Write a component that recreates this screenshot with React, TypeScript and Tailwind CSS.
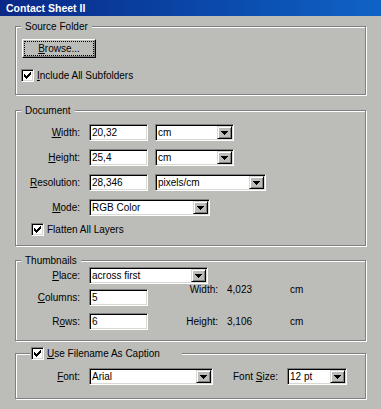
import React from 'react';

const sunken =
  'border border-t-[#808080] border-l-[#808080] border-r-white border-b-white shadow-[inset_1px_1px_0_#000,inset_-1px_-1px_0_#d8d8d4]';

const CheckMark = () => (
  <svg width="7" height="7" viewBox="0 0 7 7" shapeRendering="crispEdges">
    <path d="M6 0h1v1h-1z M5 1h2v1h-2z M0 2h1v1h-1z M4 2h3v1h-3z M0 3h2v1h-2z M3 3h3v1h-3z M0 4h5v1h-5z M1 5h3v1h-3z M2 6h1v1h-1z" />
  </svg>
);

const Check = ({ children, className = '' }: { children: React.ReactNode; className?: string }) => (
  <div className={`flex items-center h-[13px] ${className}`}>
    <span className={`${sunken} bg-white w-[13px] h-[13px] flex items-center justify-center shrink-0`}>
      <CheckMark />
    </span>
    <span className="ml-[3px] leading-[13px] whitespace-nowrap">{children}</span>
  </div>
);

const TextBox = ({ value }: { value: string }) => (
  <div className={`${sunken} bg-white w-[59px] h-[17px] pl-[2px] flex items-center`}>{value}</div>
);

const Combo = ({ value, className }: { value: string; className: string }) => (
  <div className={`${sunken} bg-white h-[17px] flex items-stretch ${className}`}>
    <span className="flex-1 pl-[2px] flex items-center whitespace-nowrap overflow-hidden">{value}</span>
    <span className="w-[15px] m-[1px] bg-[#bcbdb9] border border-t-[#d8d8d4] border-l-[#d8d8d4] border-r-black border-b-black shadow-[inset_1px_1px_0_#fff,inset_-1px_-1px_0_#808080] flex items-center justify-center">
      <svg width="7" height="4" viewBox="0 0 7 4" shapeRendering="crispEdges">
        <path d="M0 0h7v1H0z M1 1h5v1H1z M2 2h3v1H2z M3 3h1v1H3z" />
      </svg>
    </span>
  </div>
);

const Label = ({ k, rest }: { k: string; rest: string }) => (
  <span className="w-[64px] text-right whitespace-nowrap">
    <span className="underline">{k}</span>
    {rest}
  </span>
);

const Group = ({
  legend,
  className = '',
  children,
}: {
  legend: React.ReactNode;
  className?: string;
  children: React.ReactNode;
}) => (
  <fieldset className={`border border-[#808080] shadow-[1px_1px_0_#fff,inset_1px_1px_0_#fff] min-w-0 ${className}`}>
    {legend}
    {children}
  </fieldset>
);

const TextLegend = ({ text }: { text: string }) => (
  <legend className="ml-[5px] px-[4px] h-[13px] leading-[13px] bg-[#bcbdb9]">{text}</legend>
);

export default function App() {
  return (
    <div className="w-[381px] h-[409px] overflow-hidden bg-[#bcbdb9] text-black text-[10px] font-['Liberation_Sans',Arial,sans-serif]">
      <div className="h-[16px] pl-[6px] bg-linear-to-r from-[#0a2888] to-[#0f63c6] text-white font-bold text-[10.5px] leading-[16px]">
        Contact Sheet II
      </div>

      <div className="px-[15px] pt-[4px] flex flex-col">
        {/* Source Folder */}
        <Group legend={<TextLegend text="Source Folder" />}>
          <div className="flex flex-col items-start pl-[6px] pt-[6px] pb-[12px]">
            <div className="w-[74px] h-[19px] border border-t-white border-l-white border-r-black border-b-black shadow-[inset_-1px_-1px_0_#808080] p-[1px]">
              <div className="h-full border border-dotted border-black flex items-center justify-center">
                <span className="underline">B</span>rowse...
              </div>
            </div>
            <Check className="mt-[11px] -ml-[1px]">
              <span className="underline">I</span>nclude All Subfolders
            </Check>
          </div>
        </Group>

        {/* Document */}
        <Group legend={<TextLegend text="Document" />} className="mt-[9px]">
          <div className="flex flex-col pt-[7px] pb-[9px] gap-[8px]">
            <div className="flex items-center">
              <Label k="W" rest="idth:" />
              <div className="ml-[9px]"><TextBox value="20,32" /></div>
              <Combo value="cm" className="ml-[7px] w-[79px]" />
            </div>
            <div className="flex items-center">
              <Label k="H" rest="eight:" />
              <div className="ml-[9px]"><TextBox value="25,4" /></div>
              <Combo value="cm" className="ml-[7px] w-[79px]" />
            </div>
            <div className="flex items-center">
              <Label k="R" rest="esolution:" />
              <div className="ml-[9px]"><TextBox value="28,346" /></div>
              <Combo value="pixels/cm" className="ml-[7px] w-[111px]" />
            </div>
            <div className="flex items-center">
              <Label k="M" rest="ode:" />
              <Combo value="RGB Color" className="ml-[9px] w-[121px]" />
            </div>
            <Check className="ml-[15px] -mt-[1px]">Flatten All Layers</Check>
          </div>
        </Group>

        {/* Thumbnails */}
        <Group legend={<TextLegend text="Thumbnails" />} className="mt-[8px]">
          <div className="flex flex-col pb-[10px]">
            <div className="flex items-center">
              <Label k="P" rest="lace:" />
              <Combo value="across first" className="ml-[9px] w-[119px]" />
            </div>
            <div className="flex items-start mt-[5px]">
              <div className="flex flex-col gap-[7px]">
                <div className="flex items-center">
                  <Label k="C" rest="olumns:" />
                  <div className="ml-[9px]"><TextBox value="5" /></div>
                </div>
                <div className="flex items-center">
                  <span className="w-[64px] text-right">
                    R<span className="underline">o</span>ws:
                  </span>
                  <div className="ml-[9px]"><TextBox value="6" /></div>
                </div>
              </div>
              <div className="ml-[10px] -mt-[6px] flex flex-col gap-[19px] leading-[13px]">
                <div className="flex">
                  <span className="w-[60px] text-right">Width:</span>
                  <span className="ml-[9px] w-[63px]">4,023</span>
                  <span>cm</span>
                </div>
                <div className="flex">
                  <span className="w-[60px] text-right">Height:</span>
                  <span className="ml-[9px] w-[63px]">3,106</span>
                  <span>cm</span>
                </div>
              </div>
            </div>
          </div>
        </Group>

        {/* Caption */}
        <Group
          className="mt-[6px]"
          legend={
            <legend className="ml-[14px] px-[1px] w-[152px] h-[13px] bg-[#bcbdb9]">
              <Check>
                <span className="underline">U</span>se Filename As Caption
              </Check>
            </legend>
          }
        >
          <div className="flex items-center pt-[8px] pb-[13px]">
            <Label k="F" rest="ont:" />
            <Combo value="Arial" className="ml-[9px] w-[124px]" />
            <span className="ml-[20px] w-[44px] whitespace-nowrap">
              Font <span className="underline">S</span>ize:
            </span>
            <Combo value="12 pt" className="ml-[10px] w-[60px]" />
          </div>
        </Group>
      </div>
    </div>
  );
}
